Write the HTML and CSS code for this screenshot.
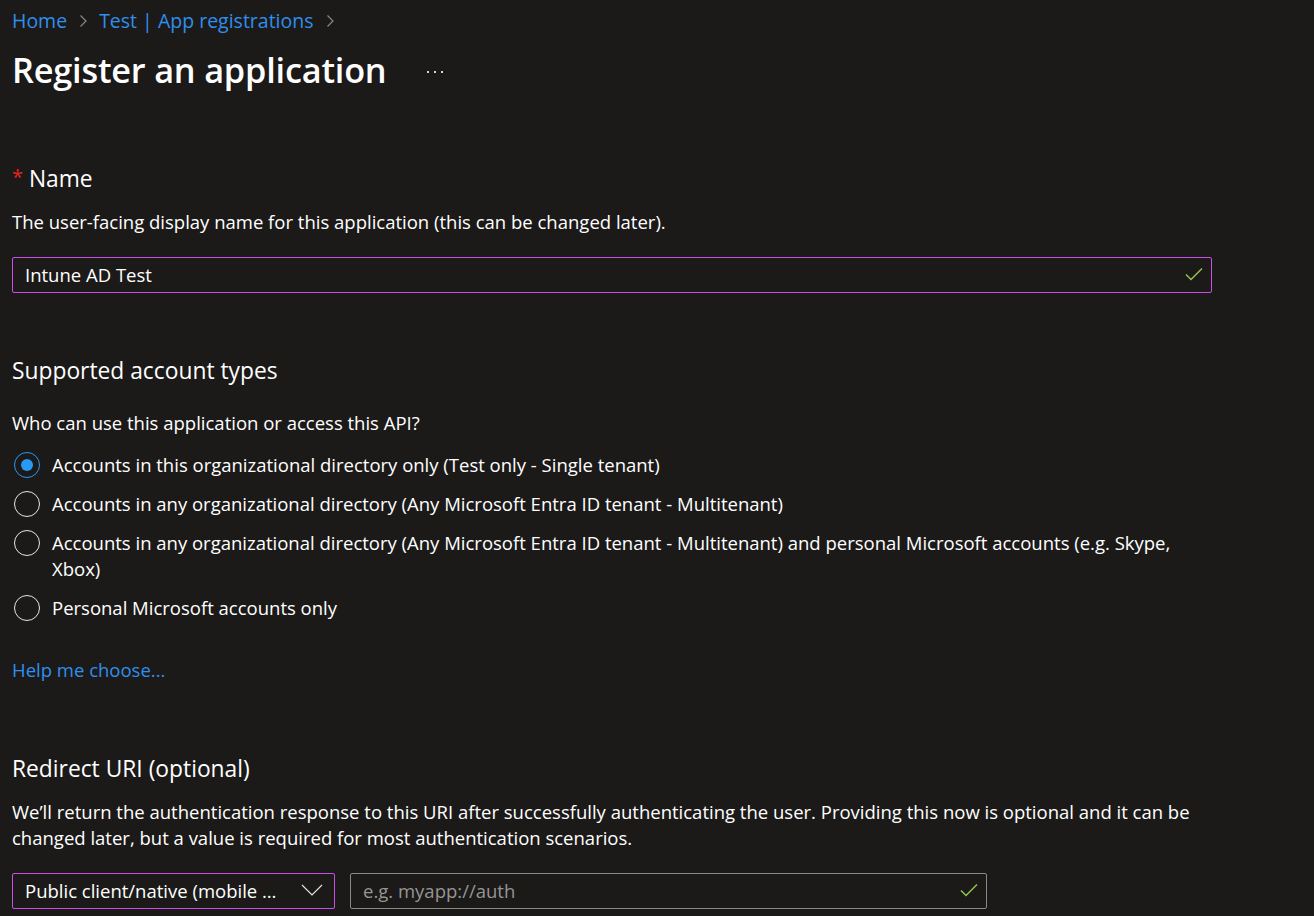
FILE: index.html
```html
<!DOCTYPE html>
<html lang="en">
<head>
<meta charset="utf-8">
<title>Register an application</title>
<link rel="stylesheet" href="styles.css">
</head>
<body>
<div class="page">
  <nav class="crumbs">
    <a class="crumb">Home</a>
    <svg class="chev" viewBox="0 0 10 16" width="10" height="16"><path d="M2.5 2.5l5.5 5.5-5.5 5.5" fill="none" stroke="#8a8886" stroke-width="1.2"/></svg>
    <a class="crumb">Test | App registrations</a>
    <svg class="chev" viewBox="0 0 10 16" width="10" height="16"><path d="M2.5 2.5l5.5 5.5-5.5 5.5" fill="none" stroke="#8a8886" stroke-width="1.2"/></svg>
  </nav>
  <div class="titlerow">
    <h1 class="title">Register an application</h1>
    <svg class="more" viewBox="0 0 18 4" width="18" height="4"><rect x="0" y="1" width="2" height="2" fill="#d8d8d8"/><rect x="7" y="1" width="2" height="2" fill="#d8d8d8"/><rect x="14" y="1" width="2" height="2" fill="#d8d8d8"/></svg>
  </div>

  <section class="sec sec-name">
    <h2 class="label"><span class="req">*</span> Name</h2>
    <p class="desc">The user-facing display name for this application (this can be changed later).</p>
    <div class="field focus wide">
      <span class="val">Intune AD Test</span>
      <svg class="check" viewBox="0 0 20 20" width="20" height="20"><path d="M2 10.5l5 5 11-11" fill="none" stroke="#92c353" stroke-width="1.5"/></svg>
    </div>
  </section>

  <section class="sec sec-types">
    <h2 class="label">Supported account types</h2>
    <p class="desc who">Who can use this application or access this API?</p>
    <div class="radios">
      <div class="radio on"><span class="dot"></span><span class="rtext">Accounts in this organizational directory only (Test only - Single tenant)</span></div>
      <div class="radio"><span class="dot"></span><span class="rtext">Accounts in any organizational directory (Any Microsoft Entra ID tenant - Multitenant)</span></div>
      <div class="radio"><span class="dot"></span><span class="rtext">Accounts in any organizational directory (Any Microsoft Entra ID tenant - Multitenant) and personal Microsoft accounts (e.g. Skype, Xbox)</span></div>
      <div class="radio"><span class="dot"></span><span class="rtext">Personal Microsoft accounts only</span></div>
    </div>
    <a class="help">Help me choose...</a>
  </section>

  <section class="sec sec-redirect">
    <h2 class="label">Redirect URI (optional)</h2>
    <p class="desc para">We’ll return the authentication response to this URI after successfully authenticating the user. Providing this now is optional and it can be changed later, but a value is required for most authentication scenarios.</p>
    <div class="uri-row">
      <div class="field focus select">
        <span class="val">Public client/native (mobile …</span>
        <svg class="down" viewBox="0 0 22 12" width="22" height="12"><path d="M1 1l10 10 10-10" fill="none" stroke="#e8e8e8" stroke-width="1.1"/></svg>
      </div>
      <div class="field uri">
        <span class="val ph">e.g. myapp://auth</span>
        <svg class="check" viewBox="0 0 20 20" width="20" height="20"><path d="M2 10.5l5 5 11-11" fill="none" stroke="#92c353" stroke-width="1.5"/></svg>
      </div>
    </div>
  </section>
</div>
</body>
</html>
```
FILE: styles.css
```css
* { box-sizing: border-box; }
html, body { margin: 0; padding: 0; }
body {
  background: #1b1a19;
  color: #ffffff;
  font-family: "Open Sans", "Noto Sans", sans-serif;
  width: 1314px;
  height: 916px;
  overflow: hidden;
}
.page { padding: 5px 0 0 12px; width: 1240px; }
.crumbs { display: flex; align-items: center; gap: 11px; height: 30px; font-size: 19.5px; }
.crumb { color: #2f8fed; }
.chev { margin-top: 1px; }
.titlerow { display: flex; align-items: center; height: 48px; margin-top: 11px; }
.title { margin: 0; font-size: 34.3px; font-weight: 600; letter-spacing: -0.2px; line-height: 48px; }
.more { margin-left: 41px; margin-top: 4px; }
.sec-name { margin-top: 69px; }
.label { margin: 0; font-size: 22.8px; font-weight: 400; line-height: 28px; }
.req { color: #e8231c; font-size: 20px; vertical-align: 3px; }
.desc { margin: 16px 0 0; font-size: 18.5px; line-height: 26px; }
.who { margin-top: 25px; }
.para { margin-top: 16px; width: 1200px; }
.field {
  display: flex; align-items: center; justify-content: space-between;
  height: 36px; border: 1px solid #8a8886; border-radius: 2px;
  padding: 0 7px 2px 12px; font-size: 18.5px;
}
.field.focus { border-color: #c94fe8; }
.wide { width: 1200px; margin-top: 22px; }
.sec-types { margin-top: 64px; }
.radios { margin-top: 16px; display: flex; flex-direction: column; gap: 13px; }
.radio { display: flex; align-items: flex-start; gap: 12px; font-size: 18.5px; line-height: 26px; }
.dot {
  flex: none; width: 26px; height: 26px; border-radius: 50%;
  border: 1px solid #e6e6e6; margin-left: 2px; position: relative;
}
.radio.on .dot { border-color: #2899f5; }
.radio.on .dot::after {
  content: ""; position: absolute; left: 6px; top: 6px; width: 12px; height: 12px;
  border-radius: 50%; background: #2899f5;
}
.rtext { width: 1160px; }
.help { display: block; margin-top: 36px; color: #2f8fed; font-size: 18.5px; line-height: 26px; }
.sec-redirect { margin-top: 72px; }
.uri-row { display: flex; gap: 15px; margin-top: 22px; }
.select { width: 323px; padding-right: 11px; }
.uri { width: 637px; }
.ph { color: #979593; }
```
